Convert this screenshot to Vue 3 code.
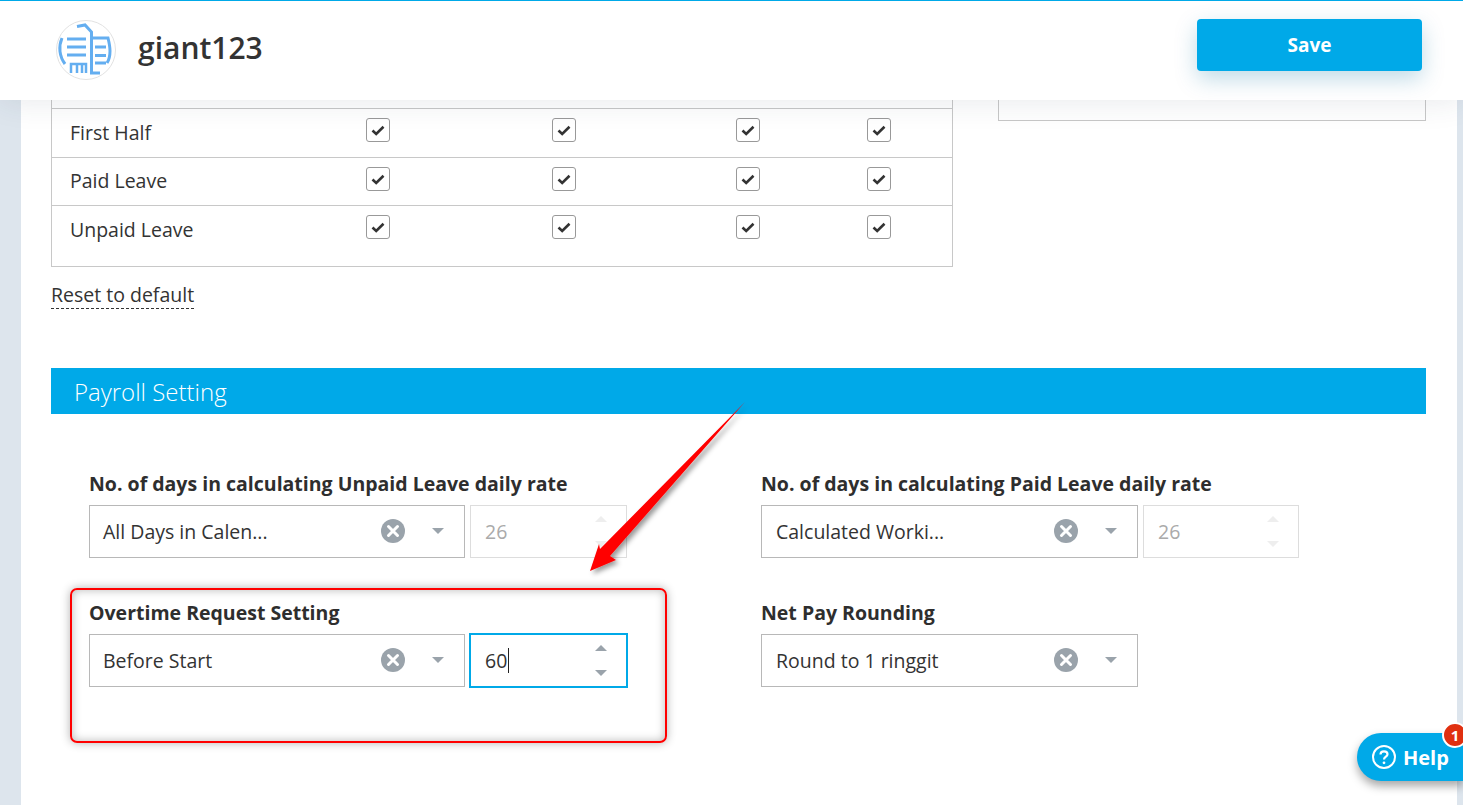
<script setup>
const rows = [
  { name: 'First Half' },
  { name: 'Paid Leave' },
  { name: 'Unpaid Leave' }
]
const cols = [0, 1, 2, 3]
const fields = [
  { label: 'No. of days in calculating Unpaid Leave daily rate', value: 'All Days in Calen...', num: '26', state: 'disabled' },
  { label: 'No. of days in calculating Paid Leave daily rate', value: 'Calculated Worki...', num: '26', state: 'disabled' },
  { label: 'Overtime Request Setting', value: 'Before Start', num: '60', state: 'focus' },
  { label: 'Net Pay Rounding', value: 'Round to 1 ringgit', num: null, state: '' }
]
</script>

<template>
  <div class="page">
    <header class="topbar">
      <div class="brand">
        <div class="logo">
          <svg width="60" height="60" viewBox="0 0 60 60" fill="none" stroke="#64aef0" stroke-width="3">
            <circle cx="30" cy="30" r="29.5" stroke="#e2e2e2" stroke-width="1" />
            <path d="M6 18 A26 26 0 0 0 9 44" />
            <path d="M11 19H30M11 27H30M11 35H30" />
            <path d="M15 53V44H30V53M21 44V53M26 44V53" stroke-width="2.500" />
            <path d="M21 6.500L29 5L35.500 12V53H44" />
            <path d="M36 18H52C53 22 54 26 54 31C54 36 53 40 51 43" />
            <path d="M39 27H50M39 35.500H50M39 43H50" />
          </svg>
        </div>
        <div class="company">giant123</div>
      </div>
      <button class="save">Save</button>
    </header>

    <main class="panel">
      <div class="top-row">
        <div class="left-col">
          <div class="table">
            <div class="head-gap"></div>
            <div v-for="r in rows" :key="r.name" class="row">
              <div class="row-name">{{ r.name }}</div>
              <div v-for="c in cols" :key="c" class="cell">
                <span class="check">
                  <svg width="14" height="11" viewBox="0 0 14 11" fill="none" stroke="#333" stroke-width="2.600">
                    <path d="M1.500 5.500L5.200 9L12.500 1.800" />
                  </svg>
                </span>
              </div>
            </div>
          </div>
          <a class="reset">Reset to default</a>
        </div>
        <div class="side-box"></div>
      </div>

      <div class="banner">Payroll Setting</div>

      <div class="form">
        <div v-for="f in fields" :key="f.label" class="field">
          <div class="label">{{ f.label }}</div>
          <div class="controls">
            <div class="select">
              <span class="sel-text">{{ f.value }}</span>
              <svg class="clear" width="24" height="24" viewBox="0 0 24 24">
                <circle cx="12" cy="12" r="12" fill="#9aa3ab" />
                <path d="M7.500 7.500L16.500 16.500M16.500 7.500L7.500 16.500" stroke="#fff" stroke-width="3" stroke-linecap="round" />
              </svg>
              <span class="caret"></span>
            </div>
            <div v-if="f.num" class="number" :class="f.state">
              <span class="num-text">{{ f.num }}<i v-if="f.state === 'focus'" class="cursor"></i></span>
              <span class="spin">
                <span class="up"></span>
                <span class="down"></span>
              </span>
            </div>
          </div>
        </div>
      </div>
    </main>

    <div class="highlight"></div>
    <svg class="arrow" width="180" height="190" viewBox="0 0 180 190">
      <defs>
        <filter id="arrow-shadow" x="-20%" y="-20%" width="140%" height="140%">
          <feDropShadow dx="3" dy="3" stdDeviation="2.500" flood-color="#000" flood-opacity="0.4" />
        </filter>
      </defs>
      <polygon points="160,12 25,166 31,170 5,181 14,154 15,159" fill="#ff0000" filter="url(#arrow-shadow)" />
    </svg>

    <div class="help">
      <svg width="24" height="24" viewBox="0 0 24 24" fill="none" stroke="#fff" stroke-width="2">
        <circle cx="12" cy="12" r="11" />
        <path d="M8.500 9.500C8.500 7.500 10 6.300 12 6.300C14 6.300 15.500 7.500 15.500 9.300C15.500 11.600 12 11.800 12 14.500" stroke-width="2.200" />
        <circle cx="12" cy="17.800" r="1.400" fill="#fff" stroke="none" />
      </svg>
      <span>Help</span>
      <span class="badge">1</span>
    </div>
  </div>
</template>

<style>
html, body { margin: 0; height: 100%; overflow: hidden; background: #dde5ed; }
</style>

<style scoped>
.page {
  position: relative;
  height: 805px;
  overflow: hidden;
  font-family: "Open Sans", "Liberation Sans", sans-serif;
  color: #333;
  font-size: 19.5px;
}
.topbar {
  position: relative;
  z-index: 2;
  box-sizing: border-box;
  height: 100px;
  border-top: 1px solid #00a9e8;
  background: #fff;
  display: flex;
  align-items: flex-start;
  justify-content: space-between;
  padding: 18px 41px 0 56px;
  box-shadow: 0 0 30px rgba(40, 60, 80, 0.12);
}
.brand { display: flex; align-items: center; gap: 22px; margin-top: 1px; }
.logo { width: 60px; height: 60px; }
.logo svg { display: block; }
.company { font-size: 30px; font-weight: 600; color: #333; margin-top: -6px; }
.save {
  width: 225px;
  height: 52px;
  border: 0;
  border-radius: 4px;
  background: #00a9e8;
  color: #fff;
  font: 700 19px "Open Sans", sans-serif;
  box-shadow: 0 8px 22px rgba(0, 110, 160, 0.25);
}
.panel {
  box-sizing: border-box;
  height: 705px;
  margin: 0 6px 0 21px;
  padding: 0 31px 0 30px;
  background: #fff;
}
.top-row { display: flex; justify-content: space-between; align-items: flex-start; }
.left-col { width: 902px; }
.table {
  box-sizing: border-box;
  height: 167px;
  border: 1px solid #c8c8c8;
  border-top: 0;
}
.head-gap { height: 8px; }
.row {
  display: grid;
  grid-template-columns: 314px 186px 184px 131px 1fr;
  border-top: 1px solid #c8c8c8;
  height: 48px;
}
.row:nth-child(3) { height: 47px; }
.row:nth-child(3) .row-name { padding-top: 10px; }
.row-name { padding: 11px 0 0 18px; line-height: 26px; }
.cell { padding-top: 9px; }
.check {
  box-sizing: border-box;
  width: 24px;
  height: 24px;
  border: 1px solid #999;
  border-radius: 3px;
  background: #fff;
  display: flex;
  align-items: center;
  justify-content: center;
}
.reset {
  display: inline-block;
  margin-top: 15px;
  line-height: 26px;
  border-bottom: 1px dashed #333;
}
.side-box {
  box-sizing: border-box;
  width: 428px;
  height: 21px;
  border: 1px solid #c8c8c8;
  border-top: 0;
}
.banner {
  margin-top: 59px;
  height: 46px;
  line-height: 48px;
  background: #00a9e8;
  color: #fff;
  font-size: 24px;
  font-weight: 300;
  padding-left: 23px;
}
.form {
  display: grid;
  grid-template-columns: 672px 1fr;
  row-gap: 42px;
  padding: 57px 0 0 38px;
}
.label { font-weight: 700; line-height: 26px; margin-bottom: 8px; white-space: nowrap; color: #2e2e2e; }
.controls { display: flex; gap: 5px; align-items: center; }
.select {
  box-sizing: border-box;
  width: 376px;
  height: 53px;
  border: 1px solid #b8b8b8;
  background: #fff;
  display: flex;
  align-items: center;
  padding: 0 20px 0 13px;
}
.field:nth-child(even) .select { width: 377px; padding-left: 14px; }
.field:nth-child(even) .number { width: 156px; }
.sel-text { flex: 1; }
.clear { margin-right: 27px; display: block; margin-top: -2px; }
.caret {
  width: 0;
  height: 0;
  border-left: 6px solid transparent;
  border-right: 6px solid transparent;
  border-top: 6px solid #9aa3ab;
  margin-top: -2px;
}
.number {
  box-sizing: border-box;
  width: 157px;
  height: 53px;
  border: 1px solid #b8b8b8;
  display: flex;
  align-items: center;
  justify-content: space-between;
  padding: 0 19px 0 14px;
}
.number.disabled { border-color: #ddd; color: #aaa; }
.number.focus {
  width: 159px;
  height: 55px;
  margin: -1px;
  border: 2px solid #00a9e8;
}
.num-text { display: inline-flex; align-items: center; }
.cursor { display: inline-block; width: 1px; height: 25px; background: #222; margin-left: 1px; }
.spin { display: flex; flex-direction: column; gap: 19px; align-items: center; }
.up, .down { width: 0; height: 0; border-left: 6px solid transparent; border-right: 6px solid transparent; }
.up { border-bottom: 6px solid #9aa3ab; }
.down { border-top: 6px solid #9aa3ab; }
.number.disabled .up { border-bottom-color: #eee; }
.number.disabled .down { border-top-color: #eee; }
.highlight {
  position: absolute;
  left: 70px;
  top: 588px;
  width: 597px;
  height: 155px;
  box-sizing: border-box;
  border: 2px solid #f00;
  border-radius: 7px;
  box-shadow: 0 0 10px rgba(0, 0, 0, 0.3), inset 0 0 10px rgba(0, 0, 0, 0.28);
  pointer-events: none;
}
.arrow { position: absolute; left: 585px; top: 390px; overflow: visible; }
.help {
  position: absolute;
  left: 1357px;
  top: 733px;
  width: 106px;
  height: 48px;
  border-radius: 24px 0 0 24px;
  background: #00a9e8;
  color: #fff;
  font-weight: 700;
  font-size: 20px;
  display: flex;
  align-items: center;
  gap: 7px;
  padding-left: 15px;
  box-sizing: border-box;
  box-shadow: 0 5px 10px rgba(0, 0, 0, 0.35);
}
.help svg { display: block; }
.badge {
  position: absolute;
  left: 85px;
  top: -11px;
  width: 22px;
  height: 22px;
  border-radius: 50%;
  background: #e03010;
  border: 2px solid #fff;
  box-sizing: content-box;
  font-size: 15px;
  line-height: 22px;
  text-align: center;
}
</style>
